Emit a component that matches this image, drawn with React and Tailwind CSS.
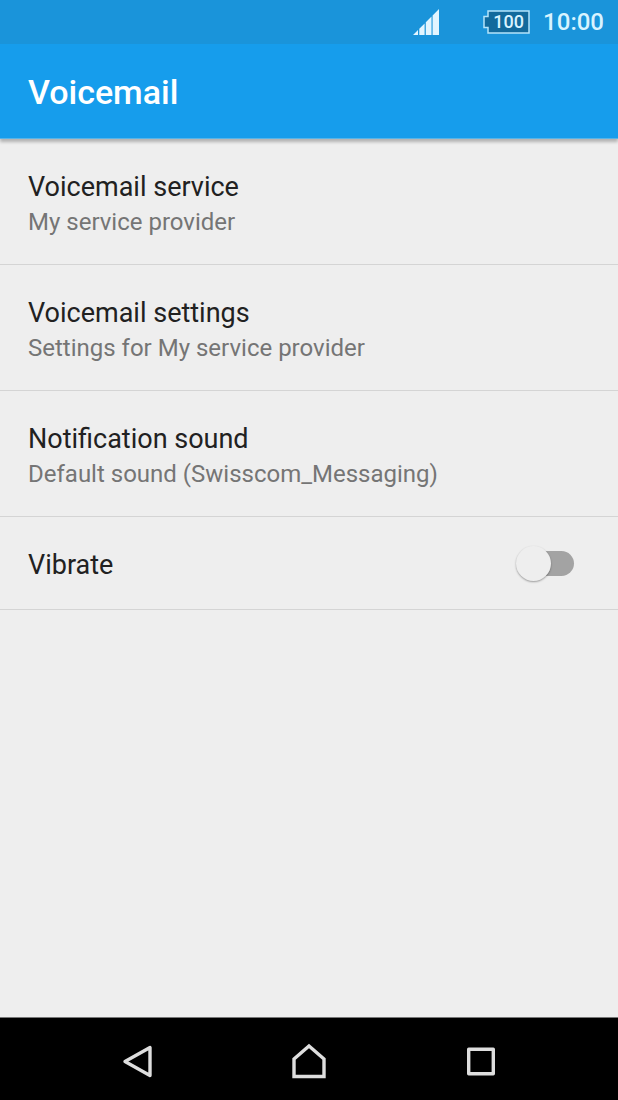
import { useState } from 'react';

const settings = [
  { title: 'Voicemail service', summary: 'My service provider' },
  { title: 'Voicemail settings', summary: 'Settings for My service provider' },
  { title: 'Notification sound', summary: 'Default sound (Swisscom_Messaging)' },
];

function StatusBar() {
  return (
    <div className="flex h-11 items-center justify-end bg-[#1a94da] pr-[14px] text-[#d8f3ff]">
      <svg className="mr-11 h-[26px] w-[26px]" viewBox="0 0 26 26" fill="#e2f5ff" aria-label="Signal">
        <path d="M0 26L5 21V26ZM6.3 19.7L11.6 14.4V26H6.3ZM12.8 13.2L18.5 7.5V26H12.8ZM19.6 6.4L26 0V26H19.6Z" />
      </svg>
      <div className="relative mr-[13px] flex h-6 w-[47px] items-center justify-center pl-1">
        <svg className="absolute inset-0 h-6 w-[47px]" viewBox="0 0 47 24" aria-hidden="true">
          <path d="M5 1H46V23H5V17.5H1V6.5H5Z" fill="#126a9c" stroke="#b4e4fa" strokeWidth="1.5" />
        </svg>
        <span className="relative text-[18px] leading-6 font-medium">100</span>
      </div>
      <span className="text-[24px] leading-8 font-medium">10:00</span>
    </div>
  );
}

function SettingRow({ title, summary }) {
  return (
    <li className="border-b border-[#d4d4d4]">
      <button type="button" className="block w-full px-7 pt-[30px] pb-[25px] text-left">
        <span className="block text-[27px] leading-9 text-[#212121]">{title}</span>
        <span className="block text-[24px] leading-[34px] text-[#757575]">{summary}</span>
      </button>
    </li>
  );
}

function VibrateRow() {
  const [on, setOn] = useState(false);

  return (
    <li className="flex h-[93px] items-center justify-between border-b border-[#d4d4d4] pr-11 pl-7">
      <label htmlFor="vibrate" className="grow pt-[3px] text-[27px] leading-9 text-[#212121]">Vibrate</label>
      <input
        id="vibrate"
        type="checkbox"
        role="switch"
        checked={on}
        onChange={(e) => setOn(e.target.checked)}
        className="relative h-[25px] w-[54px] appearance-none rounded-full bg-[#a3a3a3] before:absolute before:-top-[5px] before:-left-1 before:size-[35px] before:rounded-full before:bg-[#eeeeee] before:shadow-[0_1px_2px_rgba(0,0,0,0.35)] checked:bg-[#8ccdf5] checked:before:left-[23px] checked:before:bg-[#169dec]"
      />
    </li>
  );
}

function NavButton({ label, children }) {
  return (
    <button type="button" aria-label={label} className="flex flex-1 items-center justify-center">
      <svg className="size-10" viewBox="0 0 40 40" fill="none" stroke="#dedede" strokeWidth="3.4" strokeLinejoin="round">
        {children}
      </svg>
    </button>
  );
}

export default function App() {
  return (
    <div className="flex min-h-screen flex-col bg-[#eeeeee] font-[Roboto,sans-serif]">
      <StatusBar />
      <header className="z-10 flex h-[95px] items-center border-b border-[#58b4e8] bg-[#169dec] px-7 pt-px shadow-[0_3px_3px_rgba(0,0,0,0.25)]">
        <h1 className="text-[34px] leading-10 font-medium text-white">Voicemail</h1>
      </header>
      <main className="grow">
        <ul>
          {settings.map((item) => (
            <SettingRow key={item.title} title={item.title} summary={item.summary} />
          ))}
          <VibrateRow />
        </ul>
      </main>
      <nav className="flex h-[83px] border-t border-[#777777] bg-black px-[51px] pt-1">
        <NavButton label="Back">
          <path d="M8 20.5L33 6.5V34.5Z" />
        </NavButton>
        <NavButton label="Home">
          <path d="M20 5L35 18V35.5H5V18Z" strokeLinejoin="miter" />
        </NavButton>
        <NavButton label="Recent apps">
          <path d="M7.7 8.2H32.3V32.8H7.7Z" />
        </NavButton>
      </nav>
    </div>
  );
}
